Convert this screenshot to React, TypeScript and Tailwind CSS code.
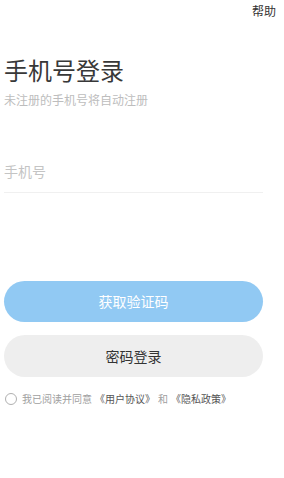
export default function App() {
  return (
    <div className="min-h-screen bg-white font-['Noto_Sans_CJK_SC',sans-serif] text-[#333]">
      <div className="flex h-[20px] items-center justify-end pr-[8px] pt-[1px] text-[12px] leading-none text-[#333]">
        帮助
      </div>

      <div className="pl-[4px] pr-[21px]">
        <h1 className="mt-[36px] text-[24px] font-normal leading-[28px] text-[#383838]">手机号登录</h1>
        <p className="mt-[9px] text-[12px] leading-[14px] text-[#bdbdbd]">未注册的手机号将自动注册</p>

        <div className="mt-[51px] border-b border-[#f0f0f0] pb-[10px]">
          <input
            className="h-[22px] w-full bg-transparent text-[14px] text-[#333] outline-none placeholder:text-[#c4c4c4]"
            placeholder="手机号"
          />
        </div>

        <button className="mt-[88px] flex h-[41px] w-full items-center justify-center rounded-full bg-[#91c9f3] text-[14px] text-white">
          获取验证码
        </button>
        <button className="mt-[13px] flex h-[42px] w-full items-center justify-center rounded-full bg-[#eeeeee] text-[14px] text-[#333]">
          密码登录
        </button>

        <div className="mt-[16px] flex items-center pl-[1px] text-[10px] leading-none text-[#a0a0a0]">
          <span className="mr-[5px] h-[12px] w-[12px] rounded-full border border-[#b0b0b0]" />
          <span>我已阅读并同意</span>
          <span className="ml-[3px] text-[#555]">《用户协议》</span>
          <span className="mx-[3px]">和</span>
          <span className="text-[#555]">《隐私政策》</span>
        </div>
      </div>
    </div>
  );
}
